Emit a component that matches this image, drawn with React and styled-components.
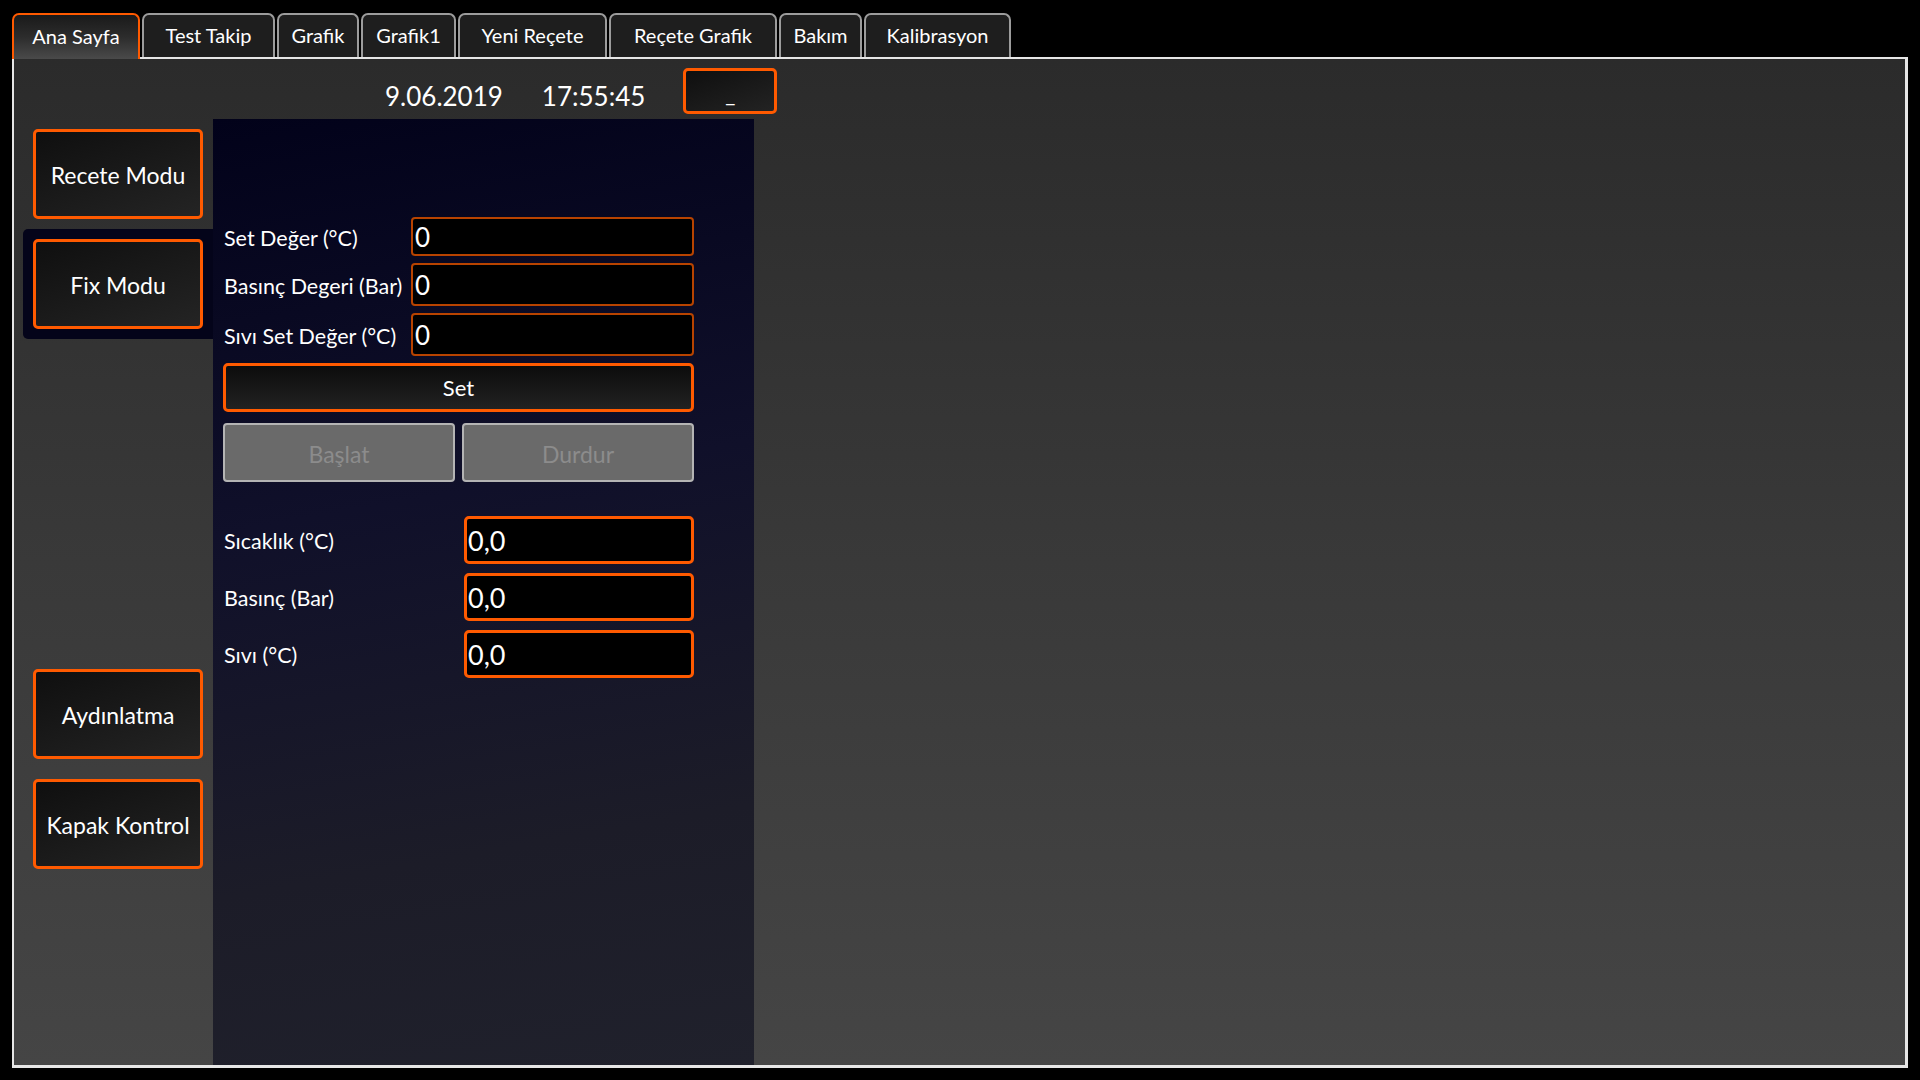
import React from "react";
import styled, { createGlobalStyle } from "styled-components";

const GlobalStyle = createGlobalStyle`
  html, body {
    margin: 0;
    padding: 0;
    background: #000;
    font-family: Lato, "Open Sans", sans-serif;
    color: #fff;
  }
`;

const tabs = [
  { label: "Ana Sayfa", width: 128 },
  { label: "Test Takip", width: 133 },
  { label: "Grafik", width: 82 },
  { label: "Grafik1", width: 95 },
  { label: "Yeni Reçete", width: 149 },
  { label: "Reçete Grafik", width: 168 },
  { label: "Bakım", width: 83 },
  { label: "Kalibrasyon", width: 147 },
];

function App() {
  return (
    <>
      <GlobalStyle />
      <Screen>
        <TabBar>
          {tabs.map((t, i) => (
            <Tab key={t.label} $active={i === 0} $w={t.width}>
              {t.label}
            </Tab>
          ))}
        </TabBar>
        <Panel>
          <Header>
            <DateText $gap={39}>9.06.2019</DateText>
            <DateText $gap={38}>17:55:45</DateText>
            <MinButton>_</MinButton>
          </Header>
          <Body>
            <SideBar>
              <SideSlot>
                <SideButton>Recete Modu</SideButton>
              </SideSlot>
              <SideSlot $active>
                <SideButton>Fix Modu</SideButton>
              </SideSlot>
              <SideSlot $push>
                <SideButton>Aydınlatma</SideButton>
              </SideSlot>
              <SideSlot>
                <SideButton>Kapak Kontrol</SideButton>
              </SideSlot>
            </SideBar>
            <FixPanel>
              <SetGrid>
                <Label>Set Değer (°C)</Label>
                <Field $h={39}>0</Field>
                <Label>Basınç Degeri (Bar)</Label>
                <Field $h={43}>0</Field>
                <Label>Sıvı Set Değer (°C)</Label>
                <Field $h={43}>0</Field>
              </SetGrid>
              <SetButton>Set</SetButton>
              <ActionRow>
                <DisabledButton>Başlat</DisabledButton>
                <DisabledButton>Durdur</DisabledButton>
              </ActionRow>
              <ReadGrid>
                <Label>Sıcaklık (°C)</Label>
                <Readout>0,0</Readout>
                <Label>Basınç (Bar)</Label>
                <Readout>0,0</Readout>
                <Label>Sıvı (°C)</Label>
                <Readout>0,0</Readout>
              </ReadGrid>
            </FixPanel>
          </Body>
        </Panel>
      </Screen>
    </>
  );
}

const Screen = styled.div`
  width: 1920px;
  height: 1080px;
  box-sizing: border-box;
  padding: 11px 12px 12px 12px;
  display: flex;
  flex-direction: column;
`;

const TabBar = styled.div`
  display: flex;
  align-items: flex-end;
  gap: 2px;
  height: 46px;
`;

const Tab = styled.div`
  width: ${(p) => p.$w}px;
  box-sizing: border-box;
  height: ${(p) => (p.$active ? 46 : 44)}px;
  display: flex;
  align-items: center;
  justify-content: center;
  padding-bottom: 2px;
  font-size: 20px;
  color: #fff;
  border: 2px solid ${(p) => (p.$active ? "#ff5a00" : "#9c9c9c")};
  border-bottom: none;
  border-radius: 7px 7px 0 0;
  background: ${(p) =>
    p.$active
      ? "linear-gradient(to bottom, #1a1a1a 0%, #2c2c2c 50%, #4a4a4a 100%)"
      : "#1e1e1e"};
  position: relative;
  z-index: ${(p) => (p.$active ? 2 : 0)};
  margin-bottom: ${(p) => (p.$active ? "-2px" : "0")};
`;

const Panel = styled.div`
  flex: 1;
  display: flex;
  flex-direction: column;
  border: 2px solid #e6e6e6;
  border-bottom-width: 3px;
  border-right-width: 3px;
  background: linear-gradient(to bottom, #2b2b2b 0%, #393939 50%, #454545 100%);
  min-height: 0;
`;

const Header = styled.div`
  height: 60px;
  display: flex;
  align-items: center;
  padding-left: 371px;
  padding-top: 3px;
  box-sizing: border-box;
`;

const DateText = styled.div`
  font-size: 26px;
  color: #fff;
  margin-right: ${(p) => p.$gap}px;
  padding-top: 10px;
`;

const MinButton = styled.div`
  width: 94px;
  height: 46px;
  box-sizing: border-box;
  border: 3px solid #ff5a00;
  border-radius: 5px;
  background: linear-gradient(160deg, #0f0f0f 0%, #232323 100%);
  color: #fff;
  font-size: 22px;
  display: flex;
  align-items: flex-end;
  justify-content: center;
  padding-bottom: 4px;
`;

const Body = styled.div`
  flex: 1;
  display: flex;
  min-height: 0;
`;

const SideBar = styled.div`
  width: 199px;
  display: flex;
  flex-direction: column;
  align-items: flex-end;
`;

const SideSlot = styled.div`
  width: 190px;
  height: 110px;
  box-sizing: border-box;
  padding: 10px;
  background: ${(p) => (p.$active ? "#04041a" : "transparent")};
  border-radius: 5px 0 0 5px;
  margin-top: ${(p) => (p.$push ? "320px" : "0")};
`;

const SideButton = styled.div`
  width: 170px;
  height: 90px;
  box-sizing: border-box;
  border: 3px solid #ff5a00;
  border-radius: 5px;
  background: linear-gradient(160deg, #0f0f0f 0%, #242424 100%);
  color: #fff;
  font-size: 23px;
  display: flex;
  align-items: center;
  justify-content: center;
  padding-top: 2px;
  white-space: nowrap;
`;

const FixPanel = styled.div`
  width: 541px;
  box-sizing: border-box;
  padding: 98px 60px 0 10px;
  background: linear-gradient(170deg, #02021a 0%, #10102a 40%, #1c1c28 75%, #20212c 100%);
  display: flex;
  flex-direction: column;
`;

const SetGrid = styled.div`
  display: grid;
  grid-template-columns: 188px 283px;
  row-gap: 7px;
  align-items: center;
`;

const Label = styled.div`
  font-size: 21.5px;
  color: #fff;
  white-space: nowrap;
  padding-left: 1px;
  padding-top: 2px;
`;

const Field = styled.div`
  height: ${(p) => p.$h}px;
  box-sizing: border-box;
  border: 2px solid #b84300;
  border-radius: 4px;
  background: #000;
  color: #fff;
  font-size: 26px;
  display: flex;
  align-items: center;
  padding-left: 2px;
`;

const SetButton = styled.div`
  margin-top: 7px;
  width: 471px;
  height: 49px;
  box-sizing: border-box;
  border: 3px solid #ff5a00;
  border-radius: 5px;
  background: linear-gradient(to bottom, #0c0c0c 0%, #222 100%);
  color: #fff;
  font-size: 22px;
  display: flex;
  align-items: center;
  justify-content: center;
`;

const ActionRow = styled.div`
  margin-top: 11px;
  width: 471px;
  display: grid;
  grid-template-columns: 232px 232px;
  column-gap: 7px;
`;

const DisabledButton = styled.div`
  height: 59px;
  box-sizing: border-box;
  border: 2px solid #b4b4b4;
  border-radius: 4px;
  background: #6a6a6a;
  color: #8c8c8c;
  font-size: 23px;
  display: flex;
  align-items: center;
  justify-content: center;
  padding-top: 2px;
`;

const ReadGrid = styled.div`
  margin-top: 34px;
  width: 471px;
  display: grid;
  grid-template-columns: 241px 230px;
  row-gap: 9px;
  grid-auto-rows: 48px;
  align-items: center;
`;

const Readout = styled.div`
  height: 48px;
  box-sizing: border-box;
  border: 3px solid #ff5a00;
  border-radius: 5px;
  background: #000;
  color: #fff;
  font-size: 27px;
  display: flex;
  align-items: center;
  padding-left: 1px;
`;

export default App;
